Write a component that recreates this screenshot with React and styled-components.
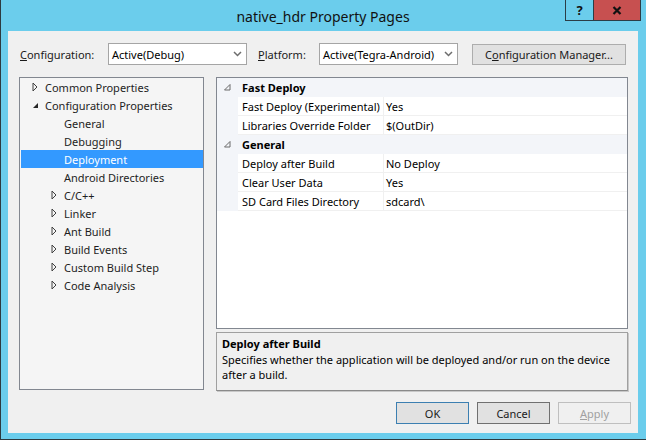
import React from 'react';
import styled, { createGlobalStyle } from 'styled-components';

const FONT = `"Segoe UI", "Noto Sans", "Open Sans", sans-serif`;

const treeItems = [
  { label: 'Common Properties', level: 0, expander: 'closed' },
  { label: 'Configuration Properties', level: 0, expander: 'open' },
  { label: 'General', level: 1 },
  { label: 'Debugging', level: 1 },
  { label: 'Deployment', level: 1, selected: true },
  { label: 'Android Directories', level: 1 },
  { label: 'C/C++', level: 1, expander: 'closed' },
  { label: 'Linker', level: 1, expander: 'closed' },
  { label: 'Ant Build', level: 1, expander: 'closed' },
  { label: 'Build Events', level: 1, expander: 'closed' },
  { label: 'Custom Build Step', level: 1, expander: 'closed' },
  { label: 'Code Analysis', level: 1, expander: 'closed' },
];

const categories = [
  {
    name: 'Fast Deploy',
    rows: [
      ['Fast Deploy (Experimental)', 'Yes'],
      ['Libraries Override Folder', '$(OutDir)'],
    ],
  },
  {
    name: 'General',
    rows: [
      ['Deploy after Build', 'No Deploy'],
      ['Clear User Data', 'Yes'],
      ['SD Card Files Directory', 'sdcard\\'],
    ],
  },
];

const GlobalStyle = createGlobalStyle`
  html, body {
    margin: 0;
    padding: 0;
    background: #ffffff;
  }
  * {
    box-sizing: border-box;
  }
`;

const Chevron = () => (
  <svg width="9" height="6" viewBox="0 0 9 6">
    <path d="M1 1 L4.5 4.5 L8 1" fill="none" stroke="#6d6d6d" strokeWidth="1.5" />
  </svg>
);

const TreeArrow = ({ open }) =>
  open ? (
    <svg width="7" height="7" viewBox="0 0 7 7">
      <path d="M6 1 L6 6 L1 6 Z" fill="#262626" />
    </svg>
  ) : (
    <svg width="6" height="10" viewBox="0 0 6 10">
      <path d="M1 1 L5 5 L1 9 Z" fill="none" stroke="#404040" strokeWidth="1" />
    </svg>
  );

const GridArrow = () => (
  <svg width="7" height="7" viewBox="0 0 7 7">
    <path d="M6 0.5 L6 6 L0.5 6 Z" fill="none" stroke="#6a6a6a" strokeWidth="1" />
  </svg>
);

const App = () => {
  return (
    <>
      <GlobalStyle />
      <Window>
        <TitleBar>
          <Title>native_hdr Property Pages</Title>
          <Caption>
            <HelpButton>?</HelpButton>
            <CloseButton>
              <svg width="10" height="9" viewBox="0 0 10 9">
                <path d="M1.5 1 L8.5 8 M8.5 1 L1.5 8" stroke="#111" strokeWidth="2.2" />
              </svg>
            </CloseButton>
          </Caption>
        </TitleBar>

        <Client>
          <TopRow>
            <FieldLabel $width={88}>
              <u>C</u>onfiguration:
            </FieldLabel>
            <Combo>
              <ComboText>Active(Debug)</ComboText>
              <ComboArrow>
                <Chevron />
              </ComboArrow>
            </Combo>
            <FieldLabel $width={61} $gap={11}>
              <u>P</u>latform:
            </FieldLabel>
            <Combo>
              <ComboText>Active(Tegra-Android)</ComboText>
              <ComboArrow>
                <Chevron />
              </ComboArrow>
            </Combo>
            <ManagerButton>
              C<u>o</u>nfiguration Manager...
            </ManagerButton>
          </TopRow>

          <Main>
            <Tree>
              {treeItems.map((item) => (
                <TreeRow key={item.label} $level={item.level} $selected={item.selected}>
                  <Expander>
                    {item.expander && <TreeArrow open={item.expander === 'open'} />}
                  </Expander>
                  {item.label}
                </TreeRow>
              ))}
            </Tree>

            <RightColumn>
              <Grid>
                {categories.map((cat) => (
                  <React.Fragment key={cat.name}>
                    <CategoryRow>
                      <Gutter>
                        <GridArrow />
                      </Gutter>
                      <CategoryName>{cat.name}</CategoryName>
                    </CategoryRow>
                    {cat.rows.map(([name, value]) => (
                      <PropRow key={name}>
                        <Gutter />
                        <PropName>{name}</PropName>
                        <PropValue>{value}</PropValue>
                      </PropRow>
                    ))}
                  </React.Fragment>
                ))}
              </Grid>

              <Description>
                <DescTitle>Deploy after Build</DescTitle>
                <DescText>
                  Specifies whether the application will be deployed and/or run on the device
                  after a build.
                </DescText>
              </Description>
            </RightColumn>
          </Main>

          <ButtonRow>
            <DialogButton $variant="default">OK</DialogButton>
            <DialogButton>Cancel</DialogButton>
            <DialogButton $variant="disabled">
              <u>A</u>pply
            </DialogButton>
          </ButtonRow>
        </Client>
      </Window>
    </>
  );
};

const Window = styled.div`
  width: 646px;
  height: 440px;
  background: #6bcdec;
  border-left: 1px solid #2d3a40;
  border-bottom: 1px solid #2d3a40;
  display: flex;
  flex-direction: column;
  font-family: ${FONT};
  font-size: 11px;
  color: #000;
`;

const TitleBar = styled.div`
  position: relative;
  height: 31px;
  flex-shrink: 0;
  display: flex;
  align-items: center;
  justify-content: center;
`;

const Title = styled.div`
  font-size: 14px;
  color: #111;
  margin-left: -1px;
  margin-top: 2px;
`;

const Caption = styled.div`
  position: absolute;
  top: 0;
  right: 5px;
  display: flex;
`;

const HelpButton = styled.div`
  width: 29px;
  height: 21px;
  border: 1px solid #2b3d46;
  border-top: none;
  display: flex;
  align-items: center;
  justify-content: center;
  font-weight: bold;
  font-size: 13px;
  color: #111;
`;

const CloseButton = styled.div`
  width: 47px;
  height: 21px;
  background: #c75050;
  border: 1px solid #2b3d46;
  border-top: none;
  border-left: none;
  display: flex;
  align-items: center;
  justify-content: center;
`;

const Client = styled.div`
  flex: 1;
  margin: 0 8px 6px 7px;
  background: #f0f0f0;
  padding: 12px 10px 9px 11px;
  display: flex;
  flex-direction: column;
`;

const TopRow = styled.div`
  height: 22px;
  display: flex;
  align-items: center;
  padding-left: 1px;
`;

const FieldLabel = styled.div`
  width: ${(p) => p.$width}px;
  margin-left: ${(p) => p.$gap || 0}px;
  flex-shrink: 0;
  color: #1a1a1a;
`;

const Combo = styled.div`
  width: 139px;
  height: 22px;
  flex-shrink: 0;
  background: #fff;
  border: 1px solid #a5a5a5;
  display: flex;
  align-items: center;
`;

const ComboText = styled.div`
  flex: 1;
  overflow: hidden;
  white-space: nowrap;
  padding-left: 3px;
`;

const ComboArrow = styled.div`
  width: 18px;
  display: flex;
  align-items: center;
  justify-content: center;
  flex-shrink: 0;
`;

const ManagerButton = styled.div`
  width: 154px;
  height: 21px;
  margin-left: 14px;
  margin-top: 1px;
  background: #e1e1e1;
  border: 1px solid #adadad;
  display: flex;
  align-items: center;
  justify-content: center;
  color: #1a1a1a;
`;

const Main = styled.div`
  height: 314px;
  margin-top: 12px;
  display: flex;
  gap: 12px;
`;

const Tree = styled.div`
  width: 185px;
  height: 313px;
  background: #f5f5f5;
  border: 1px solid #828790;
  padding: 0 0 0 1px;
  display: flex;
  flex-direction: column;
`;

const TreeRow = styled.div`
  height: 18px;
  display: flex;
  align-items: center;
  padding-left: ${(p) => 4 + p.$level * 19}px;
  background: ${(p) => (p.$selected ? '#3399ff' : 'transparent')};
  color: ${(p) => (p.$selected ? '#ffffff' : '#1e1e1e')};
  white-space: nowrap;
`;

const Expander = styled.div`
  width: 20px;
  height: 18px;
  flex-shrink: 0;
  display: flex;
  align-items: center;
  justify-content: center;
`;

const RightColumn = styled.div`
  width: 412px;
  display: flex;
  flex-direction: column;
  gap: 3px;
`;

const Grid = styled.div`
  height: 252px;
  background: #fff;
  border: 1px solid #828790;
  display: flex;
  flex-direction: column;
`;

const CategoryRow = styled.div`
  height: 19px;
  flex-shrink: 0;
  display: flex;
  align-items: center;
  background: #f3f5f9;
`;

const Gutter = styled.div`
  width: 21px;
  height: 100%;
  flex-shrink: 0;
  background: #f3f5f9;
  display: flex;
  align-items: center;
  justify-content: center;
`;

const CategoryName = styled.div`
  font-weight: bold;
  padding-left: 4px;
`;

const PropRow = styled.div`
  height: 19px;
  flex-shrink: 0;
  display: flex;
`;

const PropName = styled.div`
  width: 146px;
  flex-shrink: 0;
  padding-left: 4px;
  border-bottom: 1px solid #f0f0f0;
  border-right: 1px solid #f0f0f0;
  display: flex;
  align-items: center;
  white-space: nowrap;
  overflow: hidden;
`;

const PropValue = styled.div`
  flex: 1;
  padding-left: 2px;
  border-bottom: 1px solid #f0f0f0;
  display: flex;
  align-items: center;
  white-space: nowrap;
`;

const Description = styled.div`
  height: 59px;
  border: 1px solid #a0a0a0;
  border-bottom-color: #8a8a8a;
  box-shadow: 1px 1px 0 #c8c8c8;
  background: #f0f0f0;
  padding: 2px 5px;
`;

const DescTitle = styled.div`
  font-weight: bold;
  line-height: 17px;
`;

const DescText = styled.div`
  line-height: 15px;
`;

const ButtonRow = styled.div`
  margin-top: 11px;
  margin-right: -3px;
  display: flex;
  justify-content: flex-end;
  gap: 8px;
`;

const DialogButton = styled.div`
  width: 73px;
  height: 22px;
  display: flex;
  align-items: center;
  justify-content: center;
  background: ${(p) => (p.$variant === 'disabled' ? '#f0f0f0' : '#e1e1e1')};
  border: 1px solid
    ${(p) =>
      p.$variant === 'default' ? '#3c7fb1' : p.$variant === 'disabled' ? '#bfbfbf' : '#707070'};
  color: ${(p) => (p.$variant === 'disabled' ? '#a0a0a0' : '#1a1a1a')};
`;

export default App;
